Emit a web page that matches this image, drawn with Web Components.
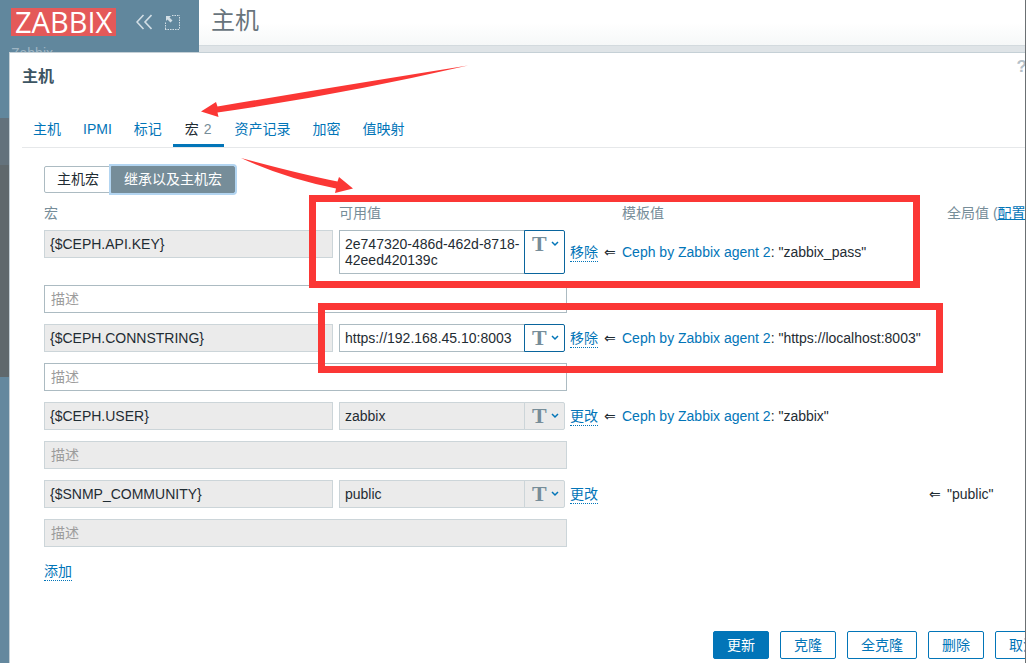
<!DOCTYPE html>
<html lang="zh-CN">
<head>
<meta charset="utf-8">
<title>主机</title>
<style>
  html, body { height: 100%; margin: 0; }
  body { font: 14px/16px "Liberation Sans", "Noto Sans CJK SC", sans-serif; color: #1f2c33; }
</style>
</head>
<body>
<zbx-app></zbx-app>

<template id="t-app">
  <style>
    :host { display: flex; position: relative; box-sizing: border-box; min-height: 100vh; overflow: hidden; background: #dfe4e7; border-right: 1px solid #6b7073; }
    main { flex: 1; min-width: 0; }
    header { height: 46px; padding: 4px 12px 0; box-sizing: border-box; background: linear-gradient(#fff 50%, #f6f8f8); border-bottom: 1px solid #d3dade; }
    h1 { margin: 0; font-size: 24px; line-height: 34px; font-weight: 400; color: #68747c; }
    zbx-dialog { position: absolute; inset: 52px -39px 0 9px; }
    zbx-marks { position: absolute; inset: 0; }
  </style>
  <zbx-sidebar></zbx-sidebar>
  <main><header><h1>主机</h1></header></main>
  <zbx-dialog>
    <span slot="title">主机</span>
    <zbx-tabs slot="tabs"></zbx-tabs>
    <zbx-switch></zbx-switch>
    <zbx-macros></zbx-macros>
    <zbx-button slot="footer" primary>更新</zbx-button>
    <zbx-button slot="footer">克隆</zbx-button>
    <zbx-button slot="footer">全克隆</zbx-button>
    <zbx-button slot="footer">删除</zbx-button>
    <zbx-button slot="footer">取消</zbx-button>
  </zbx-dialog>
  <zbx-marks></zbx-marks>
</template>

<template id="t-sidebar">
  <style>
    :host { display: block; width: 199px; background: linear-gradient(#61879d 0 118px, #63727c 118px 165px, #5f686c 165px 377px, #64889e 377px); }
    .top { display: flex; align-items: center; height: 44px; padding-left: 11px; }
    .logo { padding: 0 4px; background: #e45959; color: #fff; font: 29px/28px "Open Sans", sans-serif; text-decoration: none; margin-right: 20px; }
    button { padding: 0; border: 0; background: none; display: flex; margin-right: 13px; }
    svg { display: block; fill: none; stroke: #d2dee5; }
    .server { padding: 1px 11px; color: #9eb5c3; }
  </style>
  <div class="top">
    <a class="logo" href="#">ZABBIX</a>
    <button aria-label="折叠"><svg width="16" height="16" viewBox="0 0 16 16" stroke-width="1.6"><path d="M7.5 1 1 8l6.500 7M15.500 1 9 8l6.500 7"/></svg></button>
    <button aria-label="隐藏"><svg width="15" height="15" viewBox="0 0 15 15"><path d="M7 .5h8M14.500 2v12M14 14.500H0M.5 14V7" stroke-dasharray="1.500 1"/><path d="M1 1h5L4.500 2.500 7.500 5.500 5.500 7.500 2.500 4.500 1 6z" fill="#d2dee5" stroke="none"/></svg></button>
  </div>
  <div class="server">Zabbix</div>
</template>

<template id="t-dialog">
  <style>
    :host { display: flex; flex-direction: column; box-sizing: border-box; padding: 0 12px; background: #fff; border: 1px solid #c5d0d6; border-bottom: 0; }
    header { display: flex; justify-content: space-between; align-items: flex-start; padding-top: 12px; }
    h2 { margin: 0; font-size: 16px; line-height: 24px; font-weight: 700; color: #3c5563; }
    a { margin: -6px 24px 0 0; font-weight: 700; font-size: 17px; line-height: 16px; color: #b4c0c8; text-decoration: none; }
    .body { padding: 18px 0 0 22px; }
    footer { display: flex; justify-content: flex-end; gap: 11px; margin-top: auto; padding-bottom: 4px; }
  </style>
  <header><h2><slot name="title"></slot></h2><a href="#" aria-label="帮助">?</a></header>
  <slot name="tabs"></slot>
  <div class="body"><slot></slot></div>
  <footer><slot name="footer"></slot></footer>
</template>

<template id="t-tabs">
  <style>
    :host { display: block; margin-top: 26px; }
    nav { display: flex; height: 32px; border-bottom: 1px solid #e6e8ea; }
    a { box-sizing: border-box; height: 32px; padding: 6px 11px 0; line-height: 16px; color: #0275b8; text-decoration: none; white-space: nowrap; }
    a[aria-current] { padding: 6px 12px 0; color: #1f2c33; border-bottom: 3px solid #0275b8; }
    .count { margin-left: 5px; color: #768d99; }
  </style>
  <nav>
    <a href="#">主机</a><a href="#">IPMI</a><a href="#">标记</a><a href="#" aria-current="page">宏<span class="count">2</span></a><a href="#">资产记录</a><a href="#">加密</a><a href="#">值映射</a>
  </nav>
</template>

<template id="t-switch">
  <style>
    :host { display: block; }
    fieldset { display: flex; margin: 0; padding: 0; border: 0; min-width: 0; }
    input { position: absolute; opacity: 0; margin: 0; }
    label { display: block; box-sizing: border-box; height: 27px; padding: 4px 12px; border: 1px solid #acbbc2; border-radius: 2px 0 0 2px; line-height: 16px; white-space: nowrap; }
    label:last-of-type { margin-left: -1px; border-radius: 0 2px 2px 0; }
    input:checked + label { background: #768d99; border-color: #768d99; color: #fff; box-shadow: 0 0 0 2px #b3d5f1; }
  </style>
  <fieldset>
    <input type="radio" name="m" id="own"><label for="own">主机宏</label>
    <input type="radio" name="m" id="all" checked><label for="all">继承以及主机宏</label>
  </fieldset>
</template>

<template id="t-button">
  <style>
    :host { display: block; }
    button { display: block; box-sizing: border-box; height: 28px; padding: 0 13px; border: 1px solid #0275b8; border-radius: 2px; background: #fff; color: #0275b8; font: inherit; white-space: nowrap; }
    :host([primary]) button { background: #0275b8; color: #fff; }
  </style>
  <button type="button"><slot></slot></button>
</template>

<template id="t-value">
  <style>
    :host { display: flex; width: 226px; line-height: 16px; }
    textarea { display: block; box-sizing: border-box; flex: 1; min-width: 0; margin: 0; padding: 5px 2px 5px 5px; border: 1px solid #acbbc2; border-radius: 0; resize: none; overflow: hidden; font: inherit; color: inherit; background: #fff; outline: 0; }
    button { display: flex; align-items: flex-start; gap: 4px; box-sizing: border-box; width: 41px; margin-left: -1px; padding: 3px 0 0 7px; position: relative; border: 1px solid #0a659d; border-radius: 0 2px 2px 0; background: #fff; color: #768d99; }
    b { font: 700 22px/20px "Liberation Serif", serif; }
    svg { display: block; margin-top: 7px; fill: none; stroke: #0275b8; stroke-width: 1.500; }
    :host([inherited]) textarea, :host([inherited]) button { background: #ebebeb; border-color: #ccd5d9; }
  </style>
  <textarea aria-label="值"></textarea><button type="button" aria-haspopup="menu" aria-label="文本"><b>T</b><svg width="8" height="6" viewBox="0 0 8 6"><path d="M1 1l3 3 3-3"/></svg></button>
</template>

<template id="t-macros">
  <style>
    :host { display: block; margin-top: 8px; }
    table { width: 100%; table-layout: fixed; border-collapse: collapse; }
    th, td { padding: 0; text-align: left; vertical-align: middle; white-space: nowrap; }
    th { box-sizing: border-box; height: 29px; padding-bottom: 5px; font-weight: 400; color: #768d99; line-height: 16px; }
    td { padding-bottom: 11px; line-height: 16px; }
    td:first-child { vertical-align: top; }
    .name { width: 295px; } .value { width: 231px; } .act { width: 34px; } .arr { width: 18px; } .glob { width: 104px; }
    input { display: block; box-sizing: border-box; height: 28px; margin: 0; padding: 0 5px; border: 1px solid #ccd5d9; border-radius: 0; font: inherit; color: inherit; background: #ebebeb; outline: 0; }
    input.macro { width: calc(100% - 6px); }
    input.desc { width: calc(100% - 3px); padding: 0 6px; }
    input.desc:not([readonly]) { background: #fff; border-color: #acbbc2; }
    input::placeholder { color: #9c9c9c; opacity: 1; }
    a { color: #0275b8; text-decoration: none; }
    th a { text-decoration: underline; }
    .arrow { font-family: "DejaVu Sans", sans-serif; }
    .dot { display: block; border: 0; border-bottom: 1px dotted #0275b8; background: none; padding: 0; margin: 0; font: inherit; line-height: 18px; color: #0275b8; }
    .add { margin-top: 4px; }
  </style>
  <table>
    <colgroup><col class="name"><col class="value"><col class="act"><col class="arr"><col><col class="arr"><col class="glob"></colgroup>
    <thead><tr><th>宏</th><th>可用值</th><th></th><th></th><th>模板值</th><th></th><th>全局值 (<a href="#">配置</a>)</th></tr></thead>
    <tbody></tbody>
  </table>
  <button type="button" class="dot add">添加</button>
</template>

<template id="t-marks">
  <style>
    :host { display: block; pointer-events: none; overflow: hidden; }
    svg { display: block; }
  </style>
  <svg width="1025" height="400" viewBox="0 0 1025 400" fill="#fb3735" aria-hidden="true">
    <path d="M312.500 198.500h604v86h-604zM321.500 306.500h618v63h-618z" fill="none" stroke="#fb3735" stroke-width="7"/>
    <path d="M201 111.500 216 102l1.500 4.500Q340 86 468 65.500 340 95 217.500 112.500L218.500 117z"/>
    <path d="M353 188.500 339 177l-1.500 4.500Q300 174 241 158q43 20 95 30.500l-1 4.500z"/>
  </svg>
</template>

<script>
  class Base extends HTMLElement {
    constructor() {
      super();
      const name = this.localName.replace('zbx-', 't-');
      this.attachShadow({ mode: 'open' }).append(document.getElementById(name).content.cloneNode(true));
    }
  }

  class ZbxValue extends Base {
    connectedCallback() {
      const area = this.shadowRoot.querySelector('textarea');
      area.value = this.getAttribute('value');
      area.readOnly = this.hasAttribute('inherited');
      area.rows = this.getAttribute('lines') || 1;
    }
  }

  const MACROS = [
    { name: '{$CEPH.API.KEY}', value: '2e747320-486d-462d-8718-42eed420139c', lines: 2, own: true, tpl: 'zabbix_pass' },
    { name: '{$CEPH.CONNSTRING}', value: 'https://192.168.45.10:8003', own: true, tpl: 'https://localhost:8003' },
    { name: '{$CEPH.USER}', value: 'zabbix', tpl: 'zabbix' },
    { name: '{$SNMP_COMMUNITY}', value: 'public', global: 'public' }
  ];

  class ZbxMacros extends Base {
    connectedCallback() {
      this.shadowRoot.querySelector('tbody').innerHTML = MACROS.map(m => `
        <tr>
          <td><input class="macro" readonly aria-label="宏" value="${m.name}"></td>
          <td><zbx-value value="${m.value}" lines="${m.lines || 1}" ${m.own ? '' : 'inherited'}></zbx-value></td>
          <td><button type="button" class="dot">${m.own ? '移除' : '更改'}</button></td>
          <td class="arrow">${m.tpl ? '⇐' : ''}</td>
          <td>${m.tpl ? `<a href="#">Ceph by Zabbix agent 2</a>: "${m.tpl}"` : ''}</td>
          <td class="arrow">${m.global ? '⇐' : ''}</td>
          <td>${m.global ? `"${m.global}"` : ''}</td>
        </tr>
        <tr><td colspan="2"><input class="desc" placeholder="描述" aria-label="描述" ${m.own ? '' : 'readonly'}></td><td colspan="5"></td></tr>`).join('');
    }
  }

  customElements.define('zbx-value', ZbxValue);
  customElements.define('zbx-macros', ZbxMacros);
  for (const n of ['sidebar', 'tabs', 'switch', 'button', 'dialog', 'marks', 'app'])
    customElements.define('zbx-' + n, class extends Base {});
</script>
</body>
</html>
